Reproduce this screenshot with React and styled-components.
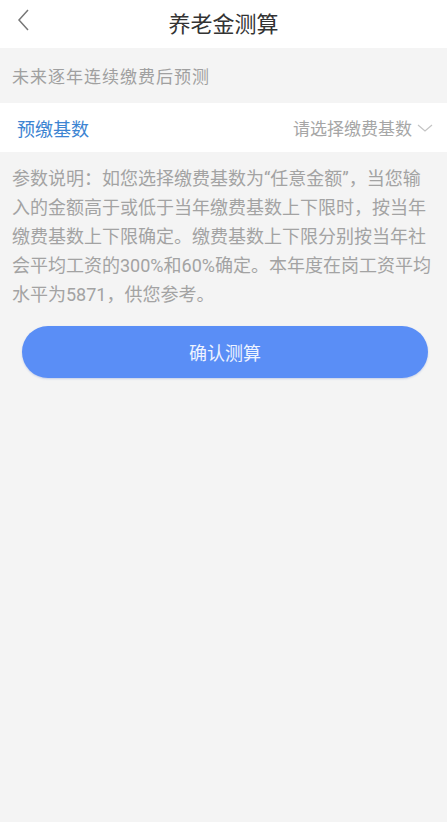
import React from 'react';
import styled, { createGlobalStyle } from 'styled-components';

const GlobalStyle = createGlobalStyle`
  html, body {
    margin: 0;
    padding: 0;
    background: #f4f4f4;
  }
  body {
    font-family: Roboto, "Noto Sans CJK SC", sans-serif;
  }
`;

const Page = styled.div`
  min-height: 822px;
  background: #f4f4f4;
  display: flex;
  flex-direction: column;
`;

const NavBar = styled.div`
  height: 48px;
  background: #fff;
  display: flex;
  align-items: center;
  justify-content: center;
  position: relative;
`;

const BackButton = styled.div`
  position: absolute;
  left: 14px;
  top: 8px;
  width: 18px;
  height: 24px;
  display: flex;
  align-items: center;
  justify-content: center;
`;

const Title = styled.div`
  font-size: 22px;
  color: #333;
  margin-top: -4px;
`;

const SectionHead = styled.div`
  height: 55px;
  display: flex;
  align-items: center;
  padding: 0 12px;
  font-size: 17px;
  letter-spacing: 1px;
  color: #a0a0a0;
`;

const Row = styled.div`
  height: 49px;
  background: #fff;
  display: flex;
  align-items: center;
  justify-content: space-between;
  padding: 0 14px 0 17px;
`;

const Label = styled.div`
  font-size: 18px;
  color: #3c84d2;
`;

const Picker = styled.div`
  display: flex;
  align-items: center;
  gap: 5px;
  font-size: 17px;
  color: #a6a6a6;
`;

const Note = styled.p`
  margin: 0;
  padding: 12px 12px 0 12px;
  font-size: 18px;
  line-height: 29px;
  color: #a3a3a3;
`;

const Submit = styled.button`
  margin: 17px 19px 0 22px;
  height: 52px;
  border: none;
  border-radius: 26px;
  background: #5a8ef6;
  color: #eef3ff;
  font-family: Roboto, "Noto Sans CJK SC", sans-serif;
  font-size: 18px;
  box-shadow: 0 1px 2px rgba(60, 100, 200, 0.25);
`;

export default function App() {
  return (
    <Page>
      <GlobalStyle />
      <NavBar>
        <BackButton>
          <svg width="14" height="22" viewBox="0 0 14 22" fill="none">
            <path d="M12 1 L3 11 L12 21" stroke="#777" strokeWidth="1.5" />
          </svg>
        </BackButton>
        <Title>养老金测算</Title>
      </NavBar>
      <SectionHead>未来逐年连续缴费后预测</SectionHead>
      <Row>
        <Label>预缴基数</Label>
        <Picker>
          请选择缴费基数
          <svg width="16" height="10" viewBox="0 0 16 10" fill="none">
            <path d="M1 2 L8 8 L15 2" stroke="#c4c4c4" strokeWidth="1.2" />
          </svg>
        </Picker>
      </Row>
      <Note>
        参数说明：如您选择缴费基数为“任意金额”，当您输入的金额高于或低于当年缴费基数上下限时，按当年缴费基数上下限确定。缴费基数上下限分别按当年社会平均工资的300%和60%确定。本年度在岗工资平均水平为5871，供您参考。
      </Note>
      <Submit>确认测算</Submit>
    </Page>
  );
}
